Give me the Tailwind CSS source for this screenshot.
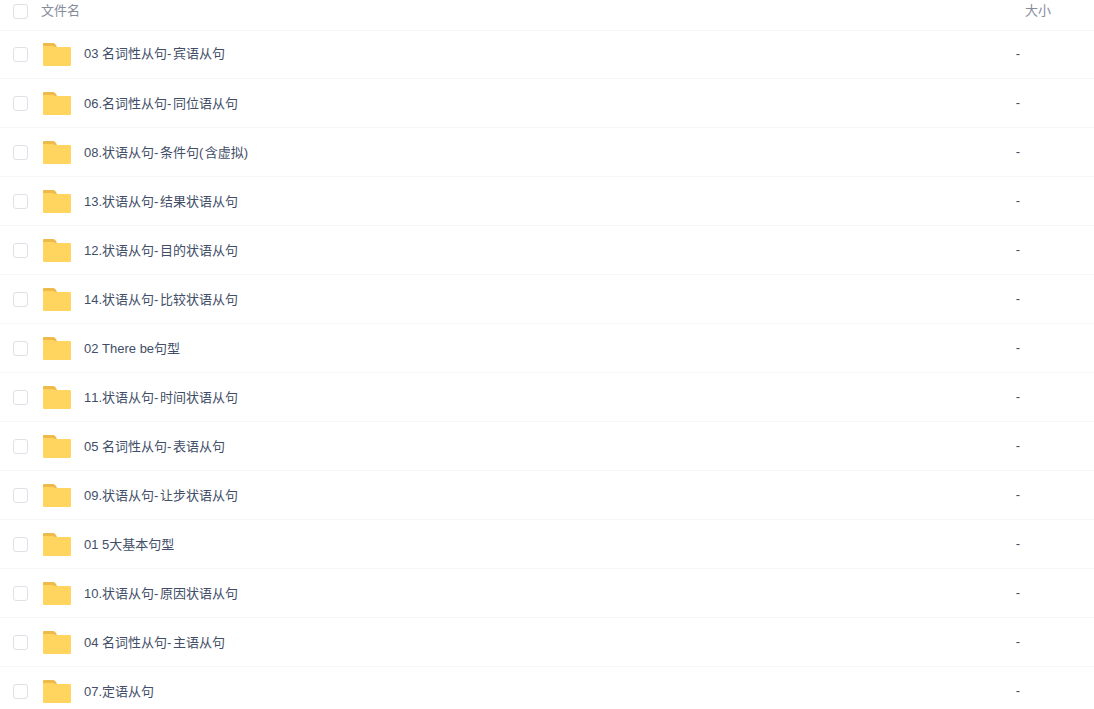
<!DOCTYPE html>
<html lang="en">
<head>
    <meta charset="UTF-8">
    <title>文件列表</title>
    <script src="https://cdn.jsdelivr.net/npm/@tailwindcss/browser@4"></script>
</head>
<body class="bg-white overflow-hidden font-['Liberation_Sans','Noto_Sans_CJK_SC',sans-serif] [font-kerning:none]">
    <div class="h-[31px] flex items-center border-b border-[#f5f6f7] text-[13px] text-[#878c9c]">
        <div class="w-[15px] h-[15px] ml-[13px] -mt-[8px] border border-[#dfe1e6] rounded-[3px]"></div>
        <div class="ml-[13px] -mt-[9px]">文件名</div>
        <div class="ml-auto mr-[43px] -mt-[9px]">大小</div>
    </div>
    <div id="list"></div>

    <script>
        const names = [
            "03 名词性从句-宾语从句",
            "06.名词性从句-同位语从句",
            "08.状语从句-条件句(含虚拟)",
            "13.状语从句-结果状语从句",
            "12.状语从句-目的状语从句",
            "14.状语从句-比较状语从句",
            "02 There be句型",
            "11.状语从句-时间状语从句",
            "05 名词性从句-表语从句",
            "09.状语从句-让步状语从句",
            "01 5大基本句型",
            "10.状语从句-原因状语从句",
            "04 名词性从句-主语从句",
            "07.定语从句"
        ];

        // hyphen and brackets run a bit wider in the original font
        const widen = (name) => name.replace(/[-()]/g, (c) => `<span class="mr-[1.5px]">${c}</span>`);

        // first row is 1px shorter than the rest
        document.getElementById("list").innerHTML = names.map((name, index) => `
            <div class="${index === 0 ? "h-[48px]" : "h-[49px]"} flex items-center border-b border-[#f5f6f7]">
                <div class="w-[15px] h-[15px] ml-[13px] border border-[#dfe1e6] rounded-[3px]"></div>
                <svg class="ml-[15px] w-[28px] h-[23px]" viewBox="0 0 28 23"><path d="M1 0h9q2 0 3 2l1 2H1a1 1 0 0 1-1-1V1a1 1 0 0 1 1-1z" fill="#eebb4a"/><path d="M0 3h10l2 1h15a1 1 0 0 1 1 1v17a1 1 0 0 1-1 1H1a1 1 0 0 1-1-1z" fill="#ffd55f"/></svg>
                <div class="ml-[13px] ${index === 0 ? "pb-[1px]" : "pt-[2px]"} text-[13px] text-[#424e67]">${widen(name)}</div>
                <div class="ml-auto mr-[74px] ${index === 0 ? "pb-[2px]" : "pb-0"} text-[13px] text-[#424e67]">-</div>
            </div>`).join("");
    </script>
</body>
</html>
